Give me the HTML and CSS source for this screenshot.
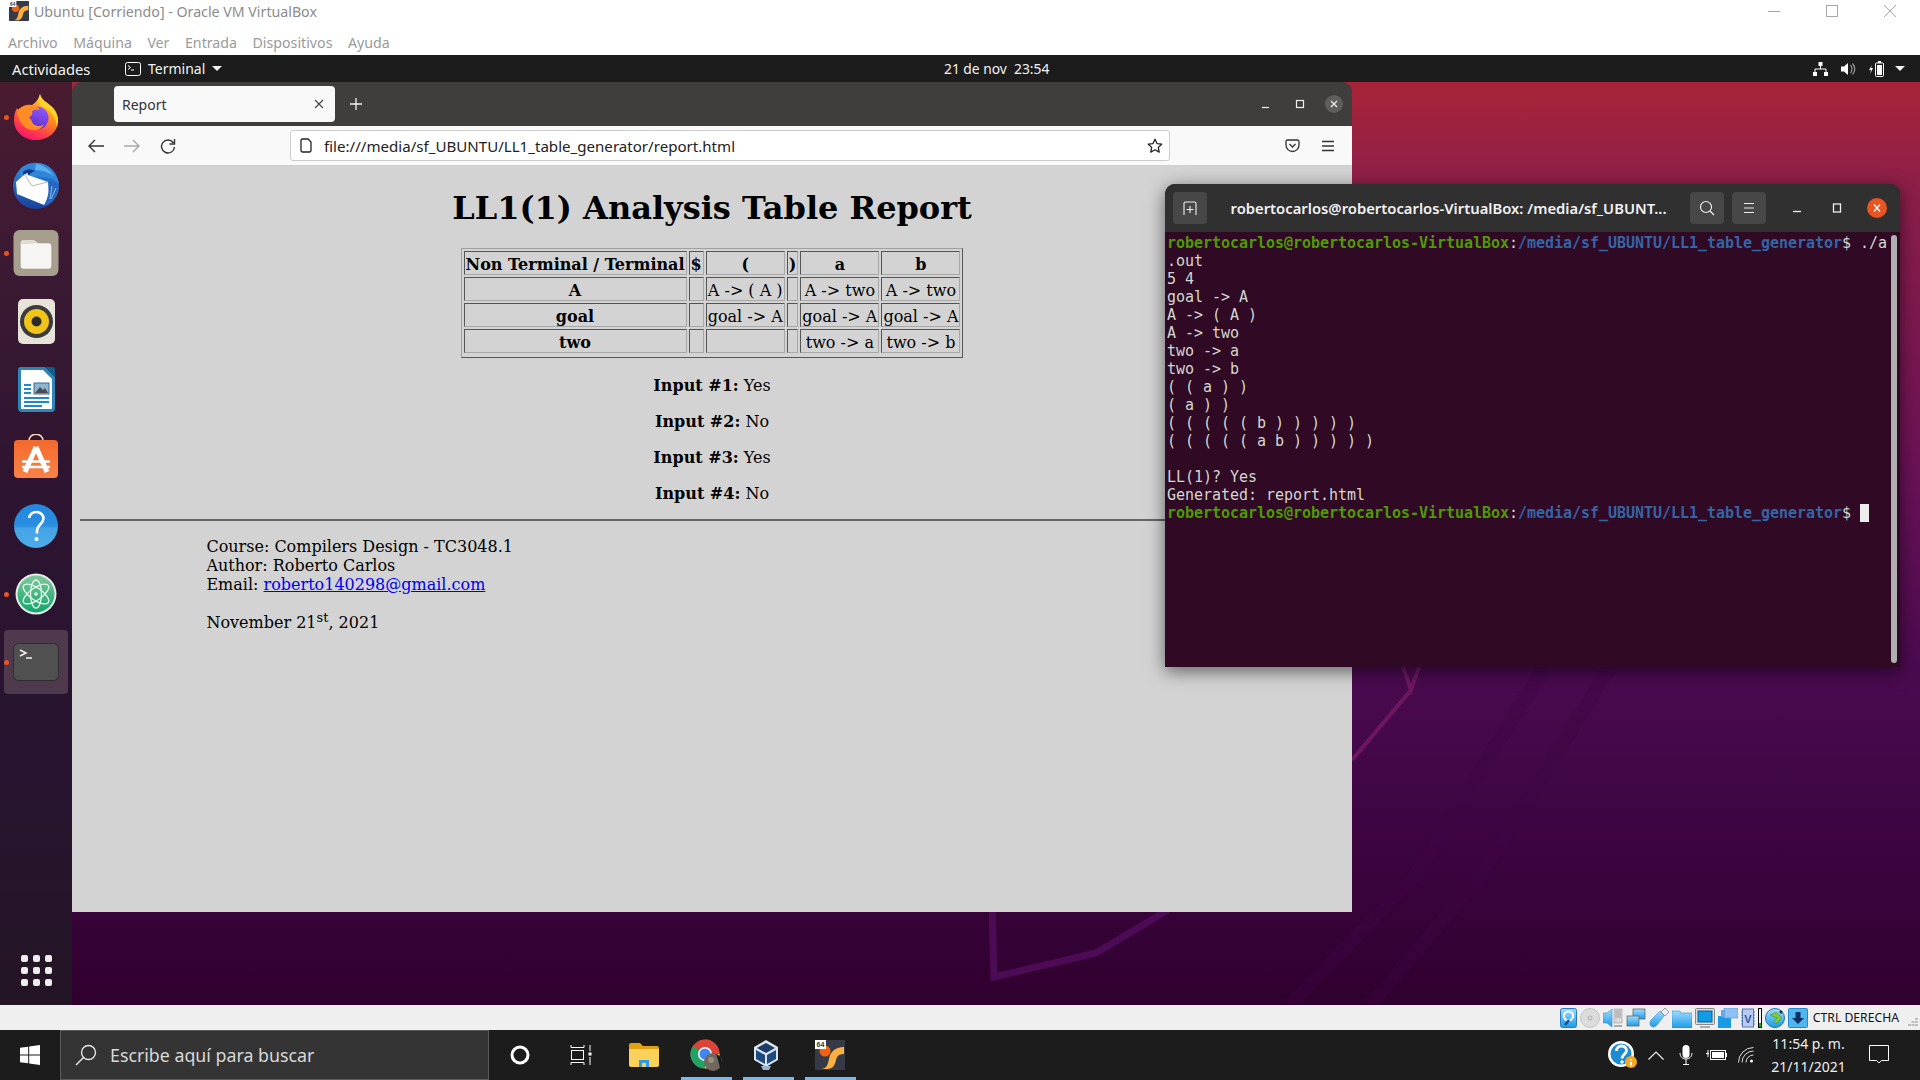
FILE: index.html
```html
<!DOCTYPE html>
<html lang="es">
<head>
    <meta charset="UTF-8">
    <title>Ubuntu [Corriendo] - Oracle VM VirtualBox</title>
    <link rel="stylesheet" href="styles.css">
</head>
<body>
    <svg class="defs" width="0" height="0">
        <defs>
            <symbol id="vbox64" viewBox="0 0 30 30">
                <rect width="30" height="30" rx="1" fill="#363a46"/>
                <circle cx="10" cy="11" r="5.5" fill="#f0640f"/>
                <path d="M29 7v7c-5 0-7 2-8 6-1 5-3 9-9 9H7c5-1 6-5 7-10 1-7 6-12 15-12z" fill="#fbb040"/>
                <rect x="0" y="0" width="11" height="9" fill="#fff"/>
                <text x="5.5" y="7.4" class="badge-text">64</text>
            </symbol>
            <linearGradient id="ffBody" x1="0.8" y1="0" x2="0.3" y2="1">
                <stop offset="0" stop-color="#ffe226"/>
                <stop offset=".45" stop-color="#ff8a1f"/>
                <stop offset=".8" stop-color="#ff3750"/>
                <stop offset="1" stop-color="#f5156c"/>
            </linearGradient>
            <linearGradient id="ffGlobe" x1="0.7" y1="0" x2="0.3" y2="1">
                <stop offset="0" stop-color="#9059ff"/>
                <stop offset="1" stop-color="#5b2bc4"/>
            </linearGradient>
            <linearGradient id="tbBody" x1="0.5" y1="0" x2="0.5" y2="1">
                <stop offset="0" stop-color="#2d8fe0"/>
                <stop offset="1" stop-color="#1b3f9c"/>
            </linearGradient>
            <linearGradient id="appBag" x1="0" y1="0" x2="0" y2="1">
                <stop offset="0" stop-color="#f4692c"/>
                <stop offset="1" stop-color="#f98348"/>
            </linearGradient>
            <linearGradient id="helpBall" x1="0" y1="0" x2="0" y2="1">
                <stop offset="0" stop-color="#2388de"/>
                <stop offset=".5" stop-color="#2a8fe0"/>
                <stop offset=".55" stop-color="#45a4e6"/>
                <stop offset="1" stop-color="#4cabe8"/>
            </linearGradient>
            <linearGradient id="atomBall" x1="0" y1="0" x2="0" y2="1">
                <stop offset="0" stop-color="#7fc89a"/>
                <stop offset="1" stop-color="#0ea66c"/>
            </linearGradient>
            <linearGradient id="vbBlue" x1="0" y1="0" x2="0" y2="1">
                <stop offset="0" stop-color="#9fdcff"/>
                <stop offset="1" stop-color="#1b9be6"/>
            </linearGradient>
        </defs>
    </svg>

    <header class="vm-title">
        <svg class="vm-title-icon" width="20" height="20"><use href="#vbox64"/></svg>
        <span class="vm-title-text">Ubuntu [Corriendo] - Oracle VM VirtualBox</span>
        <div class="win-controls">
            <svg width="12" height="12" viewBox="0 0 12 12"><path d="M0 6.5h12" stroke="#a6a6a6" fill="none"/></svg>
            <svg width="12" height="12" viewBox="0 0 12 12"><rect x=".5" y=".5" width="11" height="11" stroke="#a6a6a6" fill="none"/></svg>
            <svg width="12" height="12" viewBox="0 0 12 12"><path d="M0 0l12 12M12 0L0 12" stroke="#a6a6a6" fill="none"/></svg>
        </div>
    </header>
    <nav class="vm-menu">
        <span>Archivo</span><span>Máquina</span><span>Ver</span><span>Entrada</span><span>Dispositivos</span><span>Ayuda</span>
    </nav>

    <main class="guest">
        <div class="topbar">
            <span class="activities">Actividades</span>
            <span class="app-menu">
                <svg width="16" height="14" viewBox="0 0 16 14"><rect x=".5" y=".5" width="15" height="13" rx="2" fill="none" stroke="#fff"/><path d="M3 3.5l2.5 2L3 7.5M6 8h3" fill="none" stroke="#fff"/></svg>
                Terminal
                <i class="caret"></i>
            </span>
            <span class="clock">21 de nov&nbsp; 23:54</span>
            <div class="status-icons">
                <svg width="15" height="14" viewBox="0 0 15 14"><path d="M5.5 0h4v4h-4zM0 10h4v4H0zM11 10h4v4h-4z" fill="#fff"/><path d="M7.5 4v3M2 10V7h11v3" fill="none" stroke="#fff"/></svg>
                <svg width="15" height="14" viewBox="0 0 15 14"><path d="M0 4.500h3L7 1v12L3 9.500H0z" fill="#fff"/><path d="M9.500 3c2 2 2 6 0 8M11.500 1.500c3 3 3 8 0 11" fill="none" stroke="#999" stroke-width="1.200"/></svg>
                <svg width="15" height="16" viewBox="0 0 15 16"><path d="M3 4L0 9h2l-1 4 3-6H2z" fill="#fff"/><rect x="6.500" y="2" width="8" height="13.500" rx="1" fill="none" stroke="#fff"/><rect x="8" y="4" width="5" height="10" fill="#fff"/><rect x="9" y="0" width="3" height="2" fill="#fff"/></svg>
                <i class="caret"></i>
            </div>
        </div>

        <div class="desktop">
            <svg class="wall-lines" viewBox="0 0 1920 950" preserveAspectRatio="none">
                <path d="M992 850l2 72 102-24 72-43" fill="none" stroke="#4d0b55" stroke-width="7"/>
                <path d="M1403 612l8 23 8-23M1411 635l-59 70" fill="none" stroke="#6e1760" stroke-width="4"/>
                <path d="M1545 612L1414 822 1290 950M1610 612L1480 822 1370 950" fill="none" stroke="#3e0645" stroke-width="14" opacity=".35"/>
            </svg>

            <aside class="dock">
                <div class="dock-item">
                    <i class="run-dot"></i>
                    <svg width="46" height="46" viewBox="0 0 46 46">
                        <path d="M27 0c1 6 7 8 12 13 5 5 6 10 6 14 0 11-10 19-22 19S1 38 1 26c0-5 1-8 3-12 1 2 2 3 3 4 1-3 3-5 6-7 0 2 1 3 2 3 4-3 10-6 12-14z" fill="url(#ffBody)"/>
                        <path d="M27 0c1 6 7 8 12 13 5 5 6 10 6 14l-1 6c-1-9-6-18-17-21-2-4-1-8 0-12z" fill="#ffd22a"/>
                        <circle cx="24" cy="24" r="11.500" fill="url(#ffGlobe)"/>
                        <path d="M4 17c3-4 9-7 15-6 4 0 6 2 8 5-3-1-6 0-8 1 1 3 0 5-3 6 3 3 3 7 6 8 3 2 7 1 9-1-2 5-7 7-12 6C10 35 5 26 4 17z" fill="#ff8c25"/>
                    </svg>
                </div>
                <div class="dock-item">
                    <svg width="48" height="48" viewBox="0 0 48 48">
                        <circle cx="24" cy="25" r="23" fill="url(#tbBody)"/>
                        <path d="M8 8c7-7 18-8 26-4 6 3 11 10 13 19-5-5-10-7-16-7-8-2-14 0-19 5C9 17 7 12 8 8z" fill="#2f86da"/>
                        <path d="M24 3c8 1 14 6 18 12-6-4-12-6-19-6z" fill="#5db0ea"/>
                        <path d="M11 11c4-4 8-3 12-1-3 1-6 3-7 6l-5 6z" fill="#123a86"/>
                        <circle cx="15" cy="13" r="1" fill="#e6eef8"/>
                        <path d="M4 21l9-8 23 8 1 15-5 8L5 33z" fill="#fff"/>
                        <path d="M13 14l7 11 16-4" fill="none" stroke="#b8b8b8" stroke-width="1"/>
                        <path d="M37 20c4 1 8 3 10 7-1 8-7 16-15 18 3-6 6-15 5-25z" fill="#2a66c0"/>
                        <path d="M40 25l-2 13M44 27l-5 11" stroke="#7fc0ee" stroke-width="1"/>
                    </svg>
                </div>
                <div class="dock-item">
                    <i class="run-dot"></i>
                    <svg width="46" height="46" viewBox="0 0 44 45">
                        <rect width="44" height="45" rx="6" fill="#a79f8e"/>
                        <path d="M7 13a3 3 0 0 1 3-3h10l4 3h10a3 3 0 0 1 3 3v19a3 3 0 0 1-3 3H10a3 3 0 0 1-3-3z" fill="#f6f5f3"/>
                        <path d="M7 13a3 3 0 0 1 3-3h10l4 3-17 1z" fill="#dedbd4"/>
                    </svg>
                </div>
                <div class="dock-item">
                    <svg width="37" height="45" viewBox="0 0 37 45">
                        <rect width="37" height="45" rx="5" fill="#e7e3d8"/>
                        <circle cx="18.500" cy="22.500" r="16.500" fill="#3b3b3e"/>
                        <circle cx="18.500" cy="22.500" r="12.500" fill="#f0c419"/>
                        <circle cx="18.500" cy="22.500" r="5" fill="#2a2a2a"/>
                    </svg>
                </div>
                <div class="dock-item">
                    <svg width="37" height="45" viewBox="0 0 37 45">
                        <path d="M3 0h24l10 10v31a4 4 0 0 1-4 4H4a4 4 0 0 1-4-4V3a3 3 0 0 1 3-3z" fill="#2e86b8"/>
                        <path d="M3 3h22l9 9v29a1 1 0 0 1-1 1H4a1 1 0 0 1-1-1z" fill="#fff"/>
                        <path d="M27 0h7a3 3 0 0 1 3 3v7z" fill="#0f5f8c"/>
                        <path d="M6 17h7v2H6zM6 21h7v2H6zM6 25h7v2H6zM6 30h25v2H6zM6 34h25v2H6zM6 38h18v2H6z" fill="#1e88c9"/>
                        <rect x="16" y="16" width="15" height="11" fill="#8db5d1" stroke="#3a6d91"/>
                        <path d="M17 26l5-6 3 3 2-2 3 5z" fill="#4a4a4a"/>
                    </svg>
                </div>
                <div class="dock-item dock-item-bag">
                    <svg width="44" height="44" viewBox="0 0 44 44">
                        <path d="M15 7c0-9 14-9 14 0" fill="none" stroke="#f3d9b8" stroke-width="1.500"/>
                        <rect y="6" width="44" height="38" rx="4" fill="url(#appBag)"/>
                        <path d="M22 13L11 38M22 13l11 25" stroke="#fff" stroke-width="5" fill="none"/>
                        <path d="M8 27.500h28M8 33h28" stroke="#fff" stroke-width="2.500" fill="none"/>
                    </svg>
                </div>
                <div class="dock-item">
                    <svg width="44" height="44" viewBox="0 0 44 44">
                        <circle cx="22" cy="22" r="22" fill="url(#helpBall)"/>
                        <path d="M15 14c1-4 4-6 7.500-6 4 0 7 3 7 6.500 0 5-6 6-6.500 12v3" fill="none" stroke="#fff" stroke-width="2.600"/>
                        <circle cx="22.500" cy="35" r="2" fill="#fff"/>
                    </svg>
                </div>
                <div class="dock-item">
                    <i class="run-dot"></i>
                    <svg width="42" height="42" viewBox="0 0 42 42">
                        <circle cx="21" cy="21" r="20.500" fill="#e6ebe6"/>
                        <circle cx="21" cy="21" r="18.500" fill="url(#atomBall)"/>
                        <g fill="none" stroke="#e9f5ee" stroke-width="1.300">
                            <ellipse cx="21" cy="21" rx="15" ry="6" transform="rotate(35 21 21)"/>
                            <ellipse cx="21" cy="21" rx="15" ry="6" transform="rotate(-35 21 21)"/>
                            <ellipse cx="21" cy="21" rx="14" ry="5.500" transform="rotate(90 21 21)"/>
                        </g>
                        <circle cx="21" cy="21" r="1.800" fill="#e9f5ee"/>
                    </svg>
                </div>
                <div class="dock-item">
                    <i class="dock-tile"></i>
                    <i class="run-dot"></i>
                    <svg class="dock-icon-top" width="46" height="38" viewBox="0 0 46 38">
                        <rect x=".5" y=".5" width="45" height="37" rx="5" fill="#505050" stroke="#2e2e2e"/>
                        <path d="M7 7l6 3-6 3M13 15h6" fill="none" stroke="#f2f2f2" stroke-width="1.500"/>
                    </svg>
                </div>
                <div class="show-apps">
                    <i></i><i></i><i></i><i></i><i></i><i></i><i></i><i></i><i></i>
                </div>
            </aside>

            <section class="browser">
                <div class="tabstrip">
                    <div class="tab">
                        <span>Report</span>
                        <svg width="10" height="10" viewBox="0 0 10 10"><path d="M1 1l8 8M9 1L1 9" stroke="#444" stroke-width="1.100" fill="none"/></svg>
                    </div>
                    <svg class="new-tab" width="12" height="12" viewBox="0 0 12 12"><path d="M6 0v12M0 6h12" stroke="#f2f2f2" stroke-width="1.300" fill="none"/></svg>
                    <div class="csd-controls">
                        <svg width="10" height="10" viewBox="0 0 10 10"><path d="M1 8.500h7" stroke="#eee" stroke-width="1.200"/></svg>
                        <svg width="10" height="10" viewBox="0 0 10 10"><rect x="1.500" y="1.500" width="7" height="7" fill="none" stroke="#eee" stroke-width="1.200"/></svg>
                        <span class="csd-close"><svg width="10" height="10" viewBox="0 0 10 10"><path d="M2 2l6 6M8 2L2 8" stroke="#eee" stroke-width="1.200"/></svg></span>
                    </div>
                </div>
                <div class="toolbar">
                    <svg class="nav-back" width="16" height="14" viewBox="0 0 16 14"><path d="M7 1L1 7l6 6M1 7h15" fill="none" stroke="#333" stroke-width="1.400"/></svg>
                    <svg class="nav-forward" width="16" height="14" viewBox="0 0 16 14"><path d="M9 1l6 6-6 6M15 7H0" fill="none" stroke="#a8a8a8" stroke-width="1.400"/></svg>
                    <svg class="nav-reload" width="16" height="16" viewBox="0 0 16 16"><path d="M13.500 5A6.500 6.500 0 1 0 14.500 9" fill="none" stroke="#333" stroke-width="1.400"/><path d="M14.500 1v5h-5" fill="none" stroke="#333" stroke-width="1.400"/></svg>
                    <div class="urlbar">
                        <svg width="12" height="15" viewBox="0 0 12 15"><path d="M1 2.500A1.500 1.500 0 0 1 2.500 1H8l3 3v8.500a1.500 1.500 0 0 1-1.500 1.500h-7A1.500 1.500 0 0 1 1 12.500z" fill="none" stroke="#222" stroke-width="1.300"/></svg>
                        <span class="url-text">file:///media/sf_UBUNTU/LL1_table_generator/report.html</span>
                        <svg class="url-star" width="16" height="16" viewBox="0 0 16 16"><path d="M8 1.300l2 4.300 4.700.6-3.400 3.200.9 4.700L8 11.800l-4.200 2.300.9-4.700L1.300 6.200 6 5.600z" fill="none" stroke="#222" stroke-width="1.300" stroke-linejoin="round"/></svg>
                    </div>
                    <svg class="tb-pocket" width="15" height="14" viewBox="0 0 15 14"><path d="M1 2.500A1.500 1.500 0 0 1 2.500 1h10A1.500 1.500 0 0 1 14 2.500V6a6.500 6.500 0 0 1-13 0z" fill="none" stroke="#333" stroke-width="1.300"/><path d="M4.500 5l3 3 3-3" fill="none" stroke="#333" stroke-width="1.300"/></svg>
                    <svg class="tb-menu" width="14" height="12" viewBox="0 0 14 12"><path d="M1 1.500h12M1 6h12M1 10.500h12" stroke="#333" stroke-width="1.300"/></svg>
                </div>

                <div class="report">
                    <h1>LL1(1) Analysis Table Report</h1>
                    <table class="ll-table">
                        <tr><th>Non Terminal / Terminal</th><th>$</th><th>(</th><th>)</th><th>a</th><th>b</th></tr>
                        <tr><th>A</th><td></td><td>A -&gt; ( A )</td><td></td><td>A -&gt; two</td><td>A -&gt; two</td></tr>
                        <tr><th>goal</th><td></td><td>goal -&gt; A</td><td></td><td>goal -&gt; A</td><td>goal -&gt; A</td></tr>
                        <tr><th>two</th><td></td><td></td><td></td><td>two -&gt; a</td><td>two -&gt; b</td></tr>
                    </table>
                    <p class="result"><b>Input #1:</b> Yes</p>
                    <p class="result"><b>Input #2:</b> No</p>
                    <p class="result"><b>Input #3:</b> Yes</p>
                    <p class="result"><b>Input #4:</b> No</p>
                    <hr>
                    <div class="credits">
                        <p>Course: Compilers Design - TC3048.1<br>Author: Roberto Carlos<br>Email: <a href="#">roberto140298@gmail.com</a></p>
                        <p>November 21<sup>st</sup>, 2021</p>
                    </div>
                </div>
            </section>

            <section class="terminal">
                <div class="term-head">
                    <span class="term-btn"><svg width="14" height="14" viewBox="0 0 14 14"><path d="M1 14V2.500A1.500 1.500 0 0 1 2.500 1h9A1.500 1.500 0 0 1 13 2.500V14M7 5v7M3.500 8.500h7" fill="none" stroke="#eee" stroke-width="1.100"/></svg></span>
                    <span class="term-title">robertocarlos@robertocarlos-VirtualBox: /media/sf_UBUNT...</span>
                    <span class="term-btn"><svg width="16" height="16" viewBox="0 0 16 16"><circle cx="7" cy="7" r="5.500" fill="none" stroke="#eee" stroke-width="1.200"/><path d="M11 11l4 4" stroke="#eee" stroke-width="1.200"/></svg></span>
                    <span class="term-btn"><svg width="12" height="12" viewBox="0 0 12 12"><path d="M1 1.500h10M1 6h10M1 10.500h10" stroke="#eee" stroke-width="1.200"/></svg></span>
                    <span class="term-win term-min"><svg width="10" height="10" viewBox="0 0 10 10"><path d="M1 8.500h8" stroke="#eee" stroke-width="1.300"/></svg></span>
                    <span class="term-win"><svg width="10" height="10" viewBox="0 0 10 10"><rect x="1.500" y="1" width="7" height="8" fill="none" stroke="#eee" stroke-width="1.300"/></svg></span>
                    <span class="term-close"><svg width="10" height="10" viewBox="0 0 10 10"><path d="M2 1.500l6 7M8 1.500l-6 7" stroke="#fff" stroke-width="1.300"/></svg></span>
                </div>
                <div class="term-body">
                    <div class="term-line"><span class="pr-user">robertocarlos@robertocarlos-VirtualBox</span><span>:</span><span class="pr-path">/media/sf_UBUNTU/LL1_table_generator</span><span>$ ./a</span></div>
                    <div class="term-line">.out</div>
                    <div class="term-line">5 4</div>
                    <div class="term-line">goal -&gt; A</div>
                    <div class="term-line">A -&gt; ( A )</div>
                    <div class="term-line">A -&gt; two</div>
                    <div class="term-line">two -&gt; a</div>
                    <div class="term-line">two -&gt; b</div>
                    <div class="term-line">( ( a ) )</div>
                    <div class="term-line">( a ) )</div>
                    <div class="term-line">( ( ( ( ( b ) ) ) ) )</div>
                    <div class="term-line">( ( ( ( ( a b ) ) ) ) )</div>
                    <div class="term-line"></div>
                    <div class="term-line">LL(1)? Yes</div>
                    <div class="term-line">Generated: report.html</div>
                    <div class="term-line"><span class="pr-user">robertocarlos@robertocarlos-VirtualBox</span><span>:</span><span class="pr-path">/media/sf_UBUNTU/LL1_table_generator</span><span>$ </span><i class="term-cursor"></i></div>
                </div>
                <i class="term-scroll"></i>
            </section>
        </div>
    </main>

    <div class="vm-status">
        <svg width="17" height="20" viewBox="0 0 17 20"><rect x=".5" y=".5" width="16" height="19" rx="2" fill="url(#vbBlue)" stroke="#2a78c0"/><circle cx="8.500" cy="8" r="4.500" fill="none" stroke="#fff" stroke-width="2"/><path d="M9 12l-4 5" stroke="#0d4f9a" stroke-width="2.500"/></svg>
        <svg width="20" height="20" viewBox="0 0 20 20"><circle cx="10" cy="10" r="9.500" fill="#dcdcdc" stroke="#c4c4c4"/><circle cx="10" cy="10" r="2" fill="none" stroke="#aaa"/></svg>
        <svg width="20" height="20" viewBox="0 0 20 20"><path d="M0 5h4l5-4v18l-5-4H0z" fill="url(#vbBlue)" stroke="#3a8fd0" stroke-width=".6"/><rect x="11" y="1" width="8" height="14" fill="#d9d9d9" stroke="#999" stroke-width=".6"/><path d="M12 3h6M12 5h6M12 7h6M12 9h6" stroke="#888" stroke-width=".7"/><path d="M11 18h8" stroke="#aaa" stroke-width="2"/></svg>
        <svg width="20" height="20" viewBox="0 0 20 20"><rect x="7" y="1" width="12" height="10" fill="url(#vbBlue)" stroke="#666" stroke-width=".8"/><rect x="1" y="8" width="12" height="10" fill="url(#vbBlue)" stroke="#666" stroke-width=".8"/></svg>
        <svg width="20" height="20" viewBox="0 0 20 20"><path d="M11 3L2 12c-2 3-1 7 2 7 2 0 3-1 4-2l7-9z" fill="url(#vbBlue)" stroke="#3a8fd0" stroke-width=".6"/><path d="M12 4l4-4 4 4-4 4z" fill="#eee" stroke="#666" stroke-width=".6"/></svg>
        <svg width="20" height="20" viewBox="0 0 20 20"><path d="M0 3h8l1 2h11v15H0z" fill="url(#vbBlue)" stroke="#3a8fd0" stroke-width=".6"/></svg>
        <svg width="20" height="20" viewBox="0 0 20 20"><rect x=".5" y=".5" width="19" height="16" rx="1" fill="#ddd" stroke="#888"/><rect x="3" y="3" width="14" height="11" fill="#119ce8" stroke="#0b5d96"/><path d="M5 19h10" stroke="#aaa" stroke-width="2"/></svg>
        <svg width="20" height="20" viewBox="0 0 20 20"><rect x="0" y="8" width="13" height="12" fill="#1b9be6"/><rect x="6" y="0" width="14" height="10" fill="#8fc0f2" stroke="#5b8fd0" stroke-width=".6"/><rect x="3" y="2" width="4" height="7" fill="#6ea5e5"/></svg>
        <svg width="14" height="20" viewBox="0 0 14 20"><rect x="1.500" y="1" width="11" height="18" fill="#b9cbee" stroke="#5577bb"/><path d="M0 4h2M0 7h2M0 10h2M0 13h2M0 16h2M12 4h2M12 7h2M12 10h2M12 13h2M12 16h2" stroke="#5577bb"/><text x="7" y="14.500" class="chip-text">V</text></svg>
        <span class="cpu-meter"></span>
        <svg width="20" height="20" viewBox="0 0 20 20"><circle cx="10" cy="10" r="9.500" fill="url(#vbBlue)" stroke="#1f6fb0"/><path d="M5 7l6-3 6 6-6 6-2-3 3-3z" fill="#7ec83c" stroke="#3f8a14" stroke-width=".5"/><circle cx="16" cy="4" r="1.500" fill="#222"/></svg>
        <svg width="20" height="20" viewBox="0 0 20 20"><rect x=".5" y=".5" width="19" height="19" rx="1" fill="#4fb6ef" stroke="#2288cc"/><path d="M7.500 4h5v6H16l-6 6-6-6h3.500z" fill="#0c2f66"/></svg>
        <span class="host-key">CTRL DERECHA</span>
        <svg class="grip" width="10" height="8" viewBox="0 0 10 8"><path d="M7 0h3v2H7zM3.500 3h3v2h-3zM7 3h3v2H7zM0 6h3v2H0zM3.500 6h3v2h-3zM7 6h3v2H7z" fill="#bdbdbd"/></svg>
    </div>

    <footer class="taskbar">
        <div class="start">
            <svg width="20" height="20" viewBox="0 0 20 20"><path d="M0 2.800L8.200 1.700v7.700H0zM9.200 1.500L20 0v9.400H9.200zM0 10.400h8.200v7.900L0 17.200zM9.200 10.400H20V20L9.200 18.500z" fill="#fff"/></svg>
        </div>
        <div class="searchbox">
            <svg width="22" height="22" viewBox="0 0 22 22"><circle cx="13.500" cy="8.500" r="7" fill="none" stroke="#e6e6e6" stroke-width="1.400"/><path d="M8.500 13.500L1 21" stroke="#e6e6e6" stroke-width="1.400"/></svg>
            <span>Escribe aquí para buscar</span>
        </div>
        <div class="task-slot">
            <svg width="20" height="20" viewBox="0 0 20 20"><circle cx="10" cy="10" r="8" fill="none" stroke="#fff" stroke-width="3"/></svg>
        </div>
        <div class="task-slot">
            <svg class="task-view" width="22" height="20" viewBox="0 0 22 20"><path d="M1 0v2.500h13V0M1 20v-2.500h13V20" fill="none" stroke="#fff" stroke-width="1"/><rect x="1.500" y="5.500" width="12" height="9" fill="none" stroke="#fff"/><path d="M20 0v6M20 12v8" stroke="#fff"/><rect x="18.500" y="7.500" width="3" height="3" fill="#fff"/></svg>
        </div>
        <div class="task-slot">
            <svg width="30" height="24" viewBox="0 0 30 24"><path d="M0 2a2 2 0 0 1 2-2h9l3 3h14a2 2 0 0 1 2 2v3H0z" fill="#e2a110"/><path d="M0 6h30v16a2 2 0 0 1-2 2H2a2 2 0 0 1-2-2z" fill="#fbd15b"/><path d="M10 24v-7h10v7h-3v-4h-4v4z" fill="#2f9be6"/></svg>
        </div>
        <div class="task-slot running">
            <svg width="32" height="32" viewBox="0 0 32 32"><circle cx="15" cy="15" r="14.500" fill="#db4437"/><path d="M15 15L2.500 22.500A14.500 14.500 0 0 1 3 7z" fill="#1fa463"/><path d="M15 .5A14.500 14.500 0 0 1 29.500 15H15z" fill="#db4437"/><path d="M29.500 15A14.500 14.500 0 0 1 15 29.500L15 15z" fill="#fbc02d"/><path d="M2.500 22.500A14.500 14.500 0 0 0 15 29.500L15 15z" fill="#1fa463"/><circle cx="15" cy="15" r="7" fill="#fff"/><circle cx="15" cy="15" r="5.500" fill="#4285f4"/><circle cx="23" cy="23" r="9" fill="#6f685f"/><path d="M26 15a9 9 0 0 1 4 14c-1-5-2-9-4-14z" fill="#15181a"/><circle cx="21" cy="21" r="3" fill="#9b8f7d"/></svg>
        </div>
        <div class="task-slot running">
            <svg class="task-vbox" width="26" height="30" viewBox="0 0 26 30"><path d="M13 0l12 7v13l-12 7L1 20V7z" fill="#d9e4f2"/><path d="M13 3l9 5-9 5-9-5z" fill="#1d3d66"/><path d="M3 10l9 5v9l-9-5zM23 10l-9 5v9l9-5z" fill="#1d4a7d"/><path d="M8 26h10l-2 4h-6z" fill="#9db3cc"/></svg>
        </div>
        <div class="task-slot running">
            <svg width="30" height="30"><use href="#vbox64"/></svg>
        </div>
        <div class="tray">
            <div class="tray-slot tray-help">
                <svg width="30" height="28" viewBox="0 0 30 28"><circle cx="13" cy="13" r="13" fill="#fff"/><circle cx="13" cy="13" r="10.500" fill="#1d8bd1"/><path d="M8.500 10c0-3 2-5 5-5s5 2 5 4.500c0 3.500-4.500 4-4.500 8" fill="none" stroke="#fff" stroke-width="2.800"/><circle cx="14" cy="21" r="1.700" fill="#fff"/><circle cx="23" cy="21" r="6" fill="#f6a821"/><path d="M23 18v1.500M23 21v4" stroke="#fff" stroke-width="1.800"/></svg>
            </div>
            <div class="tray-slot"><svg width="16" height="9" viewBox="0 0 16 9"><path d="M.5 8.500L8 1l7.500 7.500" fill="none" stroke="#eee" stroke-width="1.200"/></svg></div>
            <div class="tray-slot"><svg width="14" height="20" viewBox="0 0 14 20"><rect x="3.500" y="0" width="7" height="13" rx="3.500" fill="#fff"/><path d="M1 8c0 8 12 8 12 0M7 14v5M4 19.500h6" fill="none" stroke="#fff"/></svg></div>
            <div class="tray-slot"><svg width="21" height="12" viewBox="0 0 21 12"><path d="M0 4.500h3M2 1v7" stroke="#fff"/><rect x="4.500" y="1.500" width="15" height="9" fill="none" stroke="#fff"/><rect x="6" y="3" width="12" height="6" fill="#fff"/><rect x="20" y="4" width="1" height="4" fill="#fff"/></svg></div>
            <div class="tray-slot"><svg width="17" height="16" viewBox="0 0 17 16"><g fill="none" stroke="#ddd"><path d="M.5 15.500a15 15 0 0 1 15-15"/><path d="M4 15.500a11.500 11.500 0 0 1 11.500-11.500"/><path d="M8 15.500a7.500 7.500 0 0 1 7.500-7.500"/></g><circle cx="13.500" cy="14" r="1.500" fill="#fff"/></svg></div>
            <div class="tray-clock"><span>11:54 p. m.</span><span>21/11/2021</span></div>
            <div class="tray-notify"><svg width="20" height="20" viewBox="0 0 20 20"><path d="M.5.500h19v15h-7L10 18l-2.500-2.500h-7z" fill="none" stroke="#fff"/></svg></div>
        </div>
    </footer>
</body>
</html>
```

FILE: styles.css
```css
* {
    box-sizing: border-box;
}

html, body {
    margin: 0;
    height: 100%;
    overflow: hidden;
}

body {
    display: flex;
    flex-direction: column;
    width: 1920px;
    height: 1080px;
    font-family: "Noto Sans", sans-serif;
    background: #fff;
}

.defs {
    position: absolute;
}

.badge-text {
    font: bold 7px "Liberation Sans", sans-serif;
    fill: #333;
    text-anchor: middle;
}

.chip-text {
    font: bold 11px "Liberation Sans", sans-serif;
    fill: #3355aa;
    text-anchor: middle;
}

/* virtualbox host window */
.vm-title {
    display: flex;
    align-items: center;
    height: 22px;
    flex: none;
    padding-left: 9px;
}

.vm-title-text {
    margin-left: 5px;
    font-size: 14.2px;
    color: #8c8c8c;
}

.win-controls {
    margin-left: auto;
    display: flex;
    gap: 46px;
    padding-right: 24px;
}

.vm-menu {
    display: flex;
    gap: 15.5px;
    height: 33px;
    flex: none;
    padding: 11px 0 0 8px;
    font-size: 14.2px;
    line-height: 20px;
    color: #9a9a9a;
}

/* guest screen */
.guest {
    flex: none;
    height: 950px;
    display: flex;
    flex-direction: column;
    background: linear-gradient(to bottom, #a5243a 0, #a5243a 40px, #8d1f49 130px, #6a1257 420px, #4a0a50 620px, #3c043f 800px, #2f002e 950px);
}

.topbar {
    flex: none;
    height: 27px;
    display: flex;
    align-items: center;
    padding-left: 12px;
    background: #1c1c1c;
    color: #f2f2f2;
    font-size: 14px;
}

.activities {
    width: 113px;
    font-size: 14.7px;
}

.app-menu {
    display: flex;
    align-items: center;
    gap: 7px;
    width: 819px;
}

.clock {
    font-size: 13.8px;
}

.caret {
    width: 0;
    height: 0;
    border-left: 5px solid transparent;
    border-right: 5px solid transparent;
    border-top: 5px solid #f2f2f2;
}

.status-icons {
    margin-left: auto;
    display: flex;
    align-items: center;
    gap: 13px;
    padding-right: 15px;
}

.status-icons .caret {
    margin-left: -2px;
}

.desktop {
    flex: 1;
    position: relative;
    display: flex;
}

.wall-lines {
    position: absolute;
    left: 0;
    top: -27px;
    width: 1920px;
    height: 950px;
}

/* ubuntu dock */
.dock {
    position: relative;
    width: 72px;
    flex: none;
    display: flex;
    flex-direction: column;
    padding-top: 1px;
    background: linear-gradient(to bottom, #4a1b30 0, #3d1a33 160px, #2d1430 420px, #281430 700px, #231524 923px);
}

.dock-item {
    position: relative;
    height: 68.1px;
    flex: none;
    display: flex;
    align-items: center;
    justify-content: center;
}

.dock-item-bag svg {
    margin-top: -4px;
}

.run-dot {
    position: absolute;
    left: 4px;
    top: 50%;
    width: 5px;
    height: 5px;
    margin-top: -2px;
    border-radius: 50%;
    background: #e95420;
    z-index: 2;
}

.dock-tile {
    position: absolute;
    left: 4px;
    top: 2px;
    width: 64px;
    height: 64px;
    border-radius: 4px;
    background: #4f3a4d;
}

.dock-icon-top {
    position: relative;
}

.show-apps {
    margin-top: auto;
    margin-bottom: 19px;
    align-self: center;
    display: grid;
    grid-template-columns: repeat(3, 7px);
    gap: 5px;
}

.show-apps i {
    height: 7px;
    border-radius: 2px;
    background: #ededed;
}

/* firefox window */
.browser {
    position: absolute;
    left: 72px;
    top: 0;
    width: 1280px;
    height: 830px;
    display: flex;
    flex-direction: column;
}

.tabstrip {
    height: 44px;
    flex: none;
    display: flex;
    align-items: center;
    padding-left: 42px;
    background: #3f3e3c;
    border-radius: 10px 10px 0 0;
}

.tab {
    width: 221px;
    height: 36px;
    display: flex;
    align-items: center;
    justify-content: space-between;
    padding: 0 11px 0 8px;
    background: #f9f9fa;
    border-radius: 4px;
    color: #333;
    font-size: 14px;
}

.new-tab {
    margin-left: 15px;
}

.csd-controls {
    margin-left: auto;
    display: flex;
    align-items: center;
    gap: 24px;
    padding-right: 9px;
}

.csd-close {
    width: 18px;
    height: 18px;
    margin-left: -4px;
    display: flex;
    align-items: center;
    justify-content: center;
    border-radius: 50%;
    background: #5f5e5c;
}

.toolbar {
    height: 40px;
    flex: none;
    display: flex;
    align-items: center;
    padding-left: 16px;
    background: #f9f9fa;
    border-bottom: 1px solid #cfcfcf;
}

.nav-forward {
    margin-left: 20px;
}

.nav-reload {
    margin-left: 20px;
}

.urlbar {
    width: 880px;
    height: 31px;
    margin-left: 114px;
    display: flex;
    align-items: center;
    padding: 0 4px 0 9px;
    background: #fff;
    border: 1px solid #cccccc;
    border-radius: 3px;
}

.url-text {
    margin-left: 12px;
    font-size: 15.1px;
    color: #222;
}

.url-star {
    margin-left: auto;
    margin-right: 2px;
}

.tb-pocket {
    margin-left: 115px;
}

.tb-menu {
    margin-left: 21px;
}

.report {
    flex: 1;
    padding: 0 8px;
    background: #d3d3d3;
    color: #000;
    font: 16px/20px "DejaVu Serif", serif;
    overflow: hidden;
}

.report h1 {
    width: fit-content;
    margin: 24px auto 21px;
    font-size: 32px;
    line-height: 37px;
    text-align: center;
}

.ll-table {
    margin: 0 auto;
    border: 1px solid;
    border-color: #a0a0a0 #555 #555 #a0a0a0;
    border-spacing: 2px;
    padding-bottom: 2px;
    line-height: 19px;
}

.ll-table th, .ll-table td {
    height: 24px;
    border: 1px solid;
    border-color: #555 #a8a8a8 #a8a8a8 #555;
    text-align: center;
    white-space: nowrap;
}

.ll-table th {
    padding: 3px 1px 0;
}

.ll-table td {
    padding: 2px 1px 0;
}

.result {
    width: fit-content;
    margin: 16px auto;
}

.ll-table + .result {
    margin-top: 18px;
}

.report hr {
    margin: -1px 0 0;
    height: 2px;
    border: 0;
    background: #666;
}

.credits {
    margin-left: 10%;
    line-height: 19px;
}

.credits p {
    margin: 16px 0 0;
}

.credits p + p {
    margin-top: 14px;
}

.credits a {
    color: #0000ee;
}

.credits sup {
    font-size: 13px;
}

/* gnome terminal */
.terminal {
    position: absolute;
    left: 1165px;
    top: 102px;
    width: 735px;
    height: 483px;
    display: flex;
    flex-direction: column;
    background: #300a24;
    border-radius: 10px 10px 0 0;
    box-shadow: 0 4px 18px rgba(0, 0, 0, 0.55);
}

.term-head {
    height: 48px;
    flex: none;
    display: flex;
    align-items: center;
    gap: 8px;
    padding: 0 13px 0 8px;
    background: #303030;
    border-radius: 10px 10px 0 0;
}

.term-btn {
    width: 34px;
    height: 32px;
    flex: none;
    display: flex;
    align-items: center;
    justify-content: center;
    background: #474747;
    border-radius: 4px;
}

.term-title {
    flex: 1;
    text-align: center;
    font-size: 14.8px;
    font-weight: 600;
    color: #f2f2f2;
    white-space: nowrap;
    overflow: hidden;
}

.term-win {
    width: 32px;
    flex: none;
    display: flex;
    justify-content: center;
}

.term-min {
    margin-left: 7px;
}

.term-close {
    width: 20px;
    height: 20px;
    flex: none;
    margin-left: 6px;
    display: flex;
    align-items: center;
    justify-content: center;
    border-radius: 50%;
    background: #e95420;
}

.term-body {
    padding: 2px 0 0 2px;
    font: 15px/18px "DejaVu Sans Mono", monospace;
    letter-spacing: -0.03px;
    color: #d3d7cf;
}

.term-line {
    height: 18px;
    white-space: pre;
}

.pr-user {
    color: #4e9a06;
    font-weight: bold;
}

.pr-path {
    color: #3465a4;
    font-weight: bold;
}

.term-cursor {
    display: inline-block;
    width: 9px;
    height: 18px;
    vertical-align: top;
    background: #ececec;
}

.term-scroll {
    position: absolute;
    right: 3px;
    top: 51px;
    width: 6px;
    height: 428px;
    border-radius: 3px;
    background: #b0b0b0;
}

/* virtualbox status bar */
.vm-status {
    height: 25px;
    flex: none;
    display: flex;
    align-items: center;
    justify-content: flex-end;
    gap: 3px;
    padding-right: 2px;
    background: #efefef;
}

.cpu-meter {
    width: 4px;
    height: 20px;
    background: linear-gradient(to top, #18b018 0, #18b018 20%, #f4f4f4 20%);
    border: 1px solid #000;
}

.host-key {
    margin-left: 2px;
    font-size: 12.2px;
    color: #111;
    white-space: nowrap;
}

.grip {
    margin: 8px 0 0 6px;
}

/* windows taskbar */
.taskbar {
    flex: 1;
    display: flex;
    align-items: stretch;
    padding-right: 13px;
    background: #1c1c1c;
}

.start {
    width: 60px;
    flex: none;
    display: flex;
    align-items: center;
    justify-content: center;
}

.searchbox {
    width: 429px;
    flex: none;
    display: flex;
    align-items: center;
    gap: 13px;
    padding-left: 14px;
    background: #343434;
    border: 1px solid #5a5a5a;
    color: #d8d8d8;
    font-size: 17.8px;
}

.task-slot {
    position: relative;
    width: 62px;
    flex: none;
    display: flex;
    align-items: center;
    justify-content: center;
}

.task-slot.running::after {
    content: "";
    position: absolute;
    left: 6px;
    right: 5px;
    bottom: 0;
    height: 3px;
    background: #76b9ed;
}

.task-view {
    margin-right: 3px;
}

.task-vbox {
    margin-right: 4px;
}

.tray {
    margin-left: auto;
    display: flex;
    align-items: center;
    color: #eee;
}

.tray-slot {
    width: 30px;
    display: flex;
    justify-content: center;
}

.tray-help {
    width: 40px;
    padding-left: 4px;
}

.tray-clock {
    width: 90px;
    padding-left: 5px;
    display: flex;
    flex-direction: column;
    align-items: center;
    gap: 5px;
    font-size: 14px;
    line-height: 18px;
}

.tray-notify {
    width: 56px;
    display: flex;
    justify-content: center;
}
```
